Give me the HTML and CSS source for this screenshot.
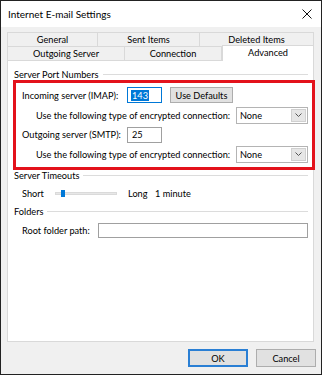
FILE: index.html
```html
<!DOCTYPE html>
<html>
<head lang="en">
    <meta charset="UTF-8">
    <title>Internet E-mail Settings</title>
    <link rel="stylesheet" href="styles.css">
</head>
<body>
<div class="dlg">
    <div class="titlebar">
        <span class="title">Internet E-mail Settings</span>
        <svg class="close" width="10" height="10" viewBox="0 0 10 10">
            <path d="M0.5 0.5L9.5 9.5M9.5 0.5L0.5 9.5" stroke="#111" stroke-width="1" fill="none"/>
        </svg>
    </div>
    <div class="body">
        <div class="tabs">
            <div class="tabrow">
                <div class="tab t-gen">General</div>
                <div class="tab t-sent">Sent Items</div>
                <div class="tab t-del">Deleted Items</div>
            </div>
            <div class="tabrow">
                <div class="tab t-out">Outgoing Server</div>
                <div class="tab t-conn">Connection</div>
                <div class="tab t-adv active">Advanced</div>
            </div>
        </div>

        <div class="panel">
            <div class="grp-head"><span>Server Port Numbers</span><i></i></div>
            <div class="ports">
                <div class="row r-port">
                    <span class="lbl-port">Incoming server (IMAP):</span>
                    <div class="field port focus"><span class="selected">143</span></div>
                    <div class="btn defaults">Use Defaults</div>
                </div>
                <div class="row r-enc">
                    <span class="lbl-enc">Use the following type of encrypted connection:</span>
                    <div class="combo">
                        <span class="combo-text">None</span>
                        <span class="combo-arr">
                            <svg width="7" height="4" viewBox="0 0 7 4"><path d="M0.5 0.5L3.5 3.5L6.5 0.5" stroke="#555" fill="none"/></svg>
                        </span>
                    </div>
                </div>
                <div class="row r-port r-smtp">
                    <span class="lbl-port">Outgoing server (SMTP):</span>
                    <div class="field port"><span>25</span></div>
                </div>
                <div class="row r-enc">
                    <span class="lbl-enc">Use the following type of encrypted connection:</span>
                    <div class="combo">
                        <span class="combo-text">None</span>
                        <span class="combo-arr">
                            <svg width="7" height="4" viewBox="0 0 7 4"><path d="M0.5 0.5L3.5 3.5L6.5 0.5" stroke="#555" fill="none"/></svg>
                        </span>
                    </div>
                </div>
            </div>

            <div class="grp-head"><span>Server Timeouts</span><i></i></div>
            <div class="row r-time">
                <span class="lbl-short">Short</span>
                <div class="slider"><b class="thumb"></b></div>
                <span class="lbl-long">Long</span>
                <span>1 minute</span>
            </div>

            <div class="grp-head"><span>Folders</span><i></i></div>
            <div class="row r-root">
                <span class="lbl-root">Root folder path:</span>
                <div class="field root"></div>
            </div>

            <!-- red annotation box -->
            <div class="mark"></div>
        </div>

        <div class="footer">
            <div class="btn wide default">OK</div>
            <div class="btn wide">Cancel</div>
        </div>
    </div>
</div>
</body>
</html>
```

FILE: styles.css
```css
* {
    margin: 0;
    padding: 0;
}

body {
    background: #fff;
    font-family: Lato, "Noto Sans", sans-serif;
    font-size: 9.2px;
    color: #000;
    white-space: nowrap;
}

.dlg {
    width: 322px;
    height: 375px;
    box-sizing: border-box;
    border: 1px solid #222;
    background: #f0f0f0;
    display: flex;
    flex-direction: column;
}

.titlebar {
    height: 26px;
    flex: none;
    background: #fff;
    display: flex;
    align-items: center;
    justify-content: space-between;
    padding: 0 9px 0 7px;
}
.title {
    font-size: 10px;
}

.body {
    flex: 1;
    display: flex;
    flex-direction: column;
    padding: 5px 7px 0 6px;
}

/* tabs */
.tabrow {
    display: flex;
    height: 14px;
}
.tab {
    box-sizing: border-box;
    border: 1px solid #d9d9d9;
    border-bottom: 0;
    background: #f0f0f0;
    display: flex;
    align-items: center;
    justify-content: center;
}
.tab + .tab {
    border-left: 0;
}
.t-gen { width: 91px; }
.t-sent { width: 102px; }
.t-del { width: 114px; }
.t-out { width: 118px; }
.t-conn { width: 97px; }
.t-adv { width: 92px; }
.tab.active {
    height: 16px;
    margin-top: -1px;
    margin-bottom: -1px;
    background: #fff;
    border-left: 1px solid #d9d9d9;
    padding-bottom: 3px;
    position: relative;
    z-index: 1;
}

/* panel */
.panel {
    flex: none;
    height: 282px;
    box-sizing: border-box;
    border: 1px solid #d9d9d9;
    background: #fff;
    padding: 5px 5px 0 6px;
    position: relative;
    display: flex;
    flex-direction: column;
    gap: 3px;
}

.grp-head {
    height: 16px;
    display: flex;
    align-items: center;
    gap: 4px;
}
.grp-head i {
    flex: 1;
    height: 1px;
    background: #dcdcdc;
}

.row {
    display: flex;
    align-items: center;
}

.ports {
    display: flex;
    flex-direction: column;
}
.r-port {
    height: 20px;
    padding-left: 8px;
}
.r-smtp {
    height: 19px;
}
.lbl-port {
    width: 105px;
}
.r-enc {
    height: 20px;
    padding-left: 22px;
}
.lbl-enc {
    flex: 1;
}

.field {
    box-sizing: border-box;
    height: 16px;
    border: 1px solid #a0a0a0;
    background: #fff;
    display: flex;
    align-items: center;
    padding-left: 4px;
}
.field.port {
    width: 35px;
}
.field.focus {
    border-color: #0078d7;
    padding-left: 3px;
}
.selected {
    background: #0078d7;
    color: #fff;
    padding: 0 1px;
}

.btn {
    box-sizing: border-box;
    border: 1px solid #adadad;
    background: #e1e1e1;
    display: flex;
    align-items: center;
    justify-content: center;
}
.defaults {
    width: 63px;
    height: 16px;
    margin-left: 8px;
}

.combo {
    box-sizing: border-box;
    width: 72px;
    height: 17px;
    border: 1px solid #b4b4b4;
    background: #fff;
    display: flex;
    padding: 1px;
}
.combo-text {
    flex: 1;
    padding-left: 2px;
    display: flex;
    align-items: center;
}
.combo-arr {
    width: 13px;
    background: #e6e6e6;
    border: 1px solid #d0d0d0;
    display: flex;
    align-items: center;
    justify-content: center;
}

/* timeouts */
.r-time {
    height: 14px;
    padding-left: 8px;
}
.lbl-short {
    width: 33px;
}
.slider {
    width: 62px;
    height: 3px;
    background: #e7e7e7;
    border: 1px solid #dadada;
    box-sizing: border-box;
    position: relative;
}
.thumb {
    position: absolute;
    left: 5px;
    top: -3px;
    width: 4px;
    height: 7px;
    background: #0078d7;
}
.lbl-long {
    width: 27px;
    margin-left: 11px;
}

/* folders */
.r-root {
    height: 16px;
    padding-left: 8px;
}
.lbl-root {
    width: 76px;
}
.field.root {
    flex: 1;
    height: 15px;
}

/* annotation */
.mark {
    position: absolute;
    left: 5px;
    top: 19px;
    width: 302px;
    height: 90px;
    box-sizing: border-box;
    border: 3px solid #e3121b;
}

.footer {
    display: flex;
    justify-content: flex-end;
    gap: 8px;
    padding-top: 7px;
    margin-right: -2px;
}
.btn.wide {
    width: 60px;
    height: 18px;
}
.btn.default {
    border: 2px solid #2a7fd4;
}
```
